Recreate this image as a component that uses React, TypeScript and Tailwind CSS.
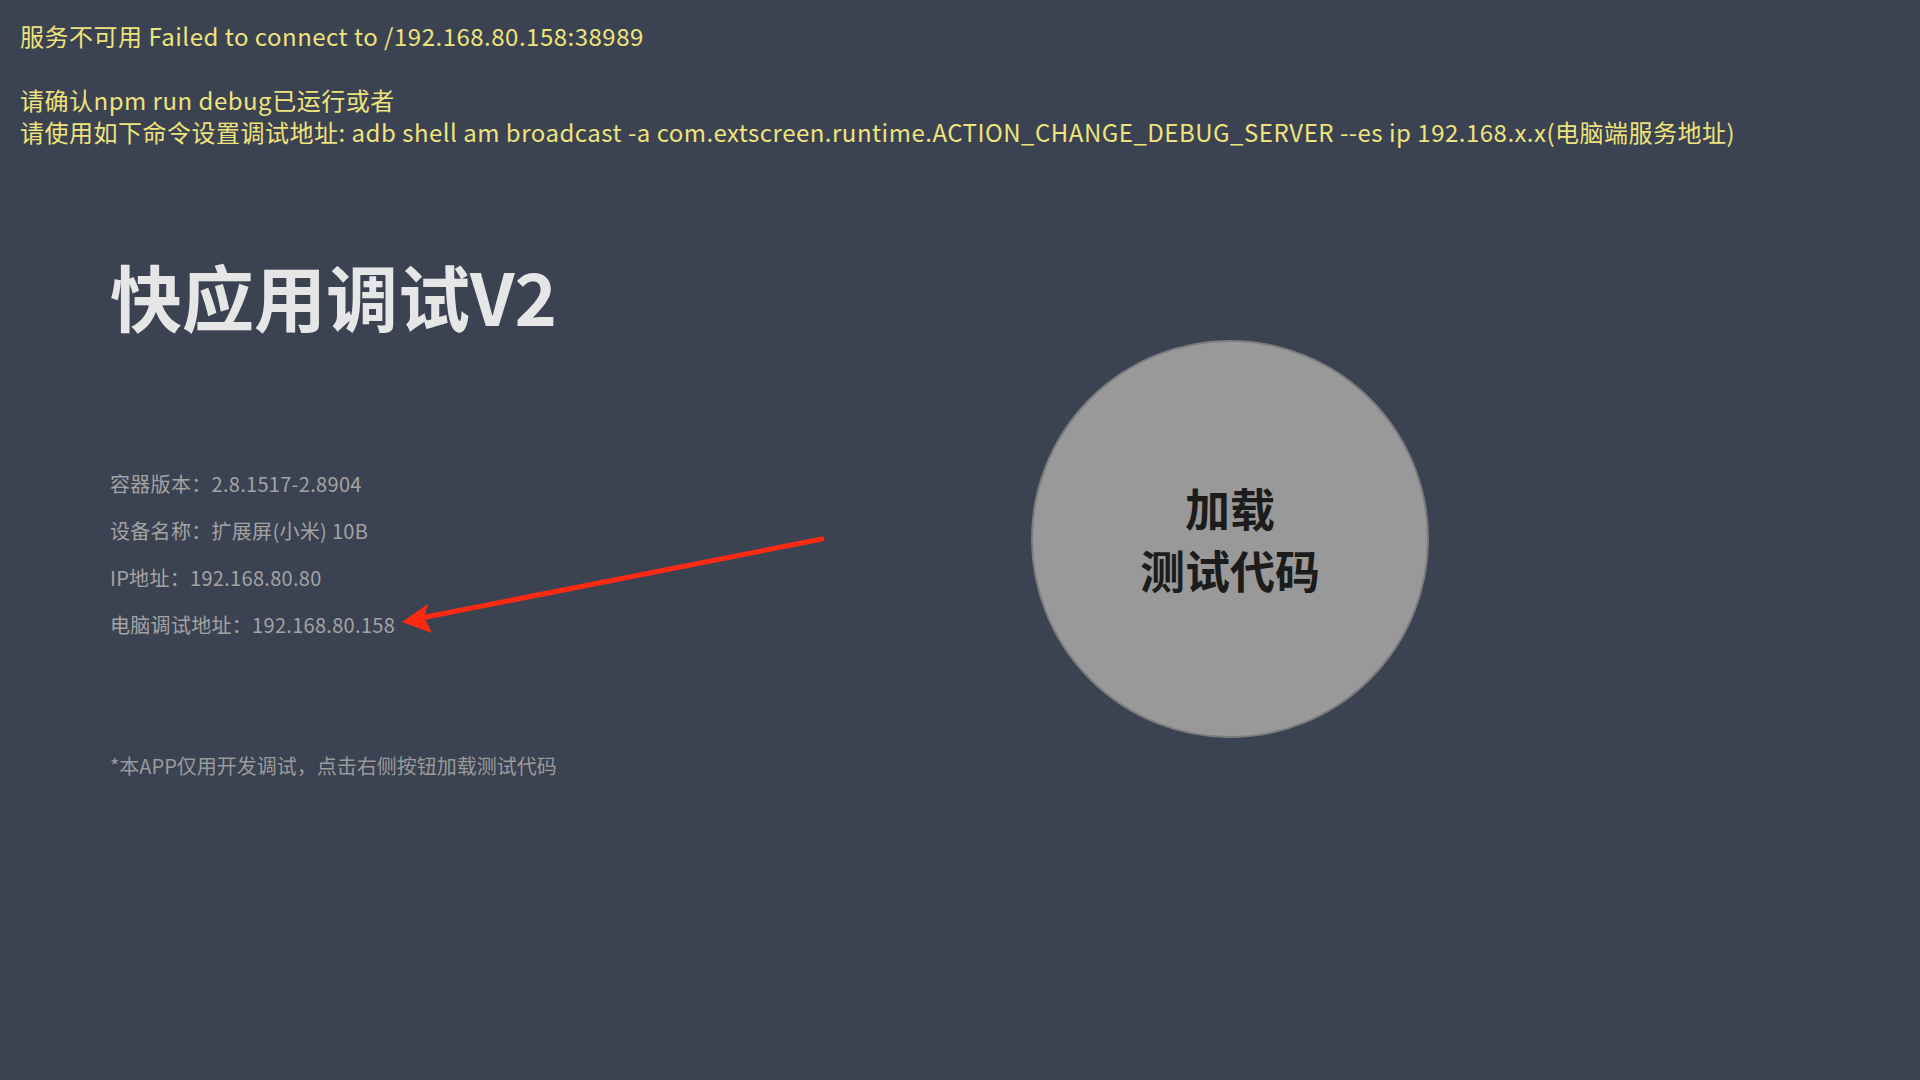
const FONT = "font-['Noto_Sans_CJK_SC','Noto_Sans',sans-serif]";

const infoRows = [
  "容器版本：2.8.1517-2.8904",
  "设备名称：扩展屏(小米) 10B",
  "IP地址：192.168.80.80",
  "电脑调试地址：192.168.80.158",
];

export default function App() {
  return (
    <div className={`relative h-[1080px] w-[1920px] overflow-hidden bg-[#3b4252] ${FONT}`}>
      {/* connection error banner */}
      <div className="px-5 pt-5 text-[24px] leading-[32px] tracking-[0.5px] text-[#efe37c]">
        <p>服务不可用 Failed to connect to /192.168.80.158:38989</p>
        <p>&nbsp;</p>
        <p>请确认npm run debug已运行或者</p>
        <p>
          请使用如下命令设置调试地址: adb shell am broadcast -a
          com.extscreen.runtime.ACTION_CHANGE_DEBUG_SERVER --es ip 192.168.x.x(电脑端服务地址)
        </p>
      </div>

      <div className="flex items-start">
        <div className="flex-1 pl-[110px] pt-[111px]">
          <h1 className="text-[72px] font-bold leading-[72px] text-[#e6e6e6]">快应用调试V2</h1>

          <div className="mt-[129px] flex flex-col">
            {infoRows.map((row) => (
              <p key={row} className="text-[20px] leading-[47px] tracking-[0.3px] text-[#a3a3a3]">
                {row}
              </p>
            ))}
          </div>

          <p className="mt-[104px] text-[20px] leading-[28px] text-[#9a9a9a]">
            *本APP仅用开发调试，点击右侧按钮加载测试代码
          </p>
        </div>

        <button className="mr-[491px] mt-[192px] flex size-[398px] flex-col items-center justify-center rounded-full border-2 border-[#7d7d7d] bg-[#999999] text-[45px] font-bold leading-[62px] text-[#1c1c1c]">
          <span>加载</span>
          <span>测试代码</span>
        </button>
      </div>

      {/* annotation arrow */}
      <svg
        className="pointer-events-none absolute left-0 top-0"
        width="1920"
        height="1080"
        viewBox="0 0 1920 1080"
      >
        <line x1="822" y1="539" x2="426" y2="617" stroke="#ff2a12" strokeWidth="5" strokeLinecap="round" />
        <polygon points="402,622 428,604 424,617 432,633" fill="#ff2a12" />
      </svg>
    </div>
  );
}
